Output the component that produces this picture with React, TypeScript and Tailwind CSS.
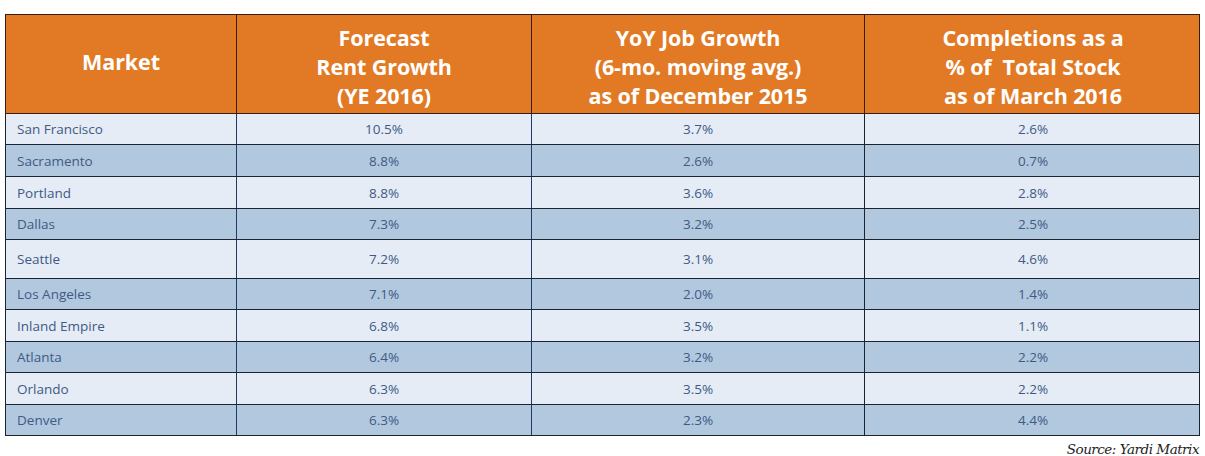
const rows = [
  { market: 'San Francisco', rent: '10.5%', job: '3.7%', comp: '2.6%', h: 'h-[31px]' },
  { market: 'Sacramento', rent: '8.8%', job: '2.6%', comp: '0.7%', h: 'h-[32px]' },
  { market: 'Portland', rent: '8.8%', job: '3.6%', comp: '2.8%', h: 'h-[32px]' },
  { market: 'Dallas', rent: '7.3%', job: '3.2%', comp: '2.5%', h: 'h-[31px]' },
  { market: 'Seattle', rent: '7.2%', job: '3.1%', comp: '4.6%', h: 'h-[39px]' },
  { market: 'Los Angeles', rent: '7.1%', job: '2.0%', comp: '1.4%', h: 'h-[31px]' },
  { market: 'Inland Empire', rent: '6.8%', job: '3.5%', comp: '1.1%', h: 'h-[32px]' },
  { market: 'Atlanta', rent: '6.4%', job: '3.2%', comp: '2.2%', h: 'h-[31px]' },
  { market: 'Orlando', rent: '6.3%', job: '3.5%', comp: '2.2%', h: 'h-[32px]' },
  { market: 'Denver', rent: '6.3%', job: '2.3%', comp: '4.4%', h: 'h-[31px]' },
];

const headers = [
  ['Market'],
  ['Forecast', 'Rent Growth', '(YE 2016)'],
  ['YoY Job Growth', '(6-mo. moving avg.)', 'as of December 2015'],
  ['Completions as a', '% of  Total Stock', 'as of March 2016'],
];

export default function App() {
  return (
    <div className="w-[1205px] h-[456px] bg-white pt-[14px] pl-[5px] font-['Open_Sans',sans-serif]">
      <div className="w-[1195px]">
        {/* Header */}
        <div className="grid grid-cols-[231px_295px_333px_336px] h-[100px] bg-[#e27a25] border border-[#3a1d0c]">
          {headers.map((lines, i) => (
            <div
              key={i}
              className={`flex flex-col items-center justify-center text-white font-bold text-[21.5px] leading-[29px] tracking-[-0.1px] ${
                i === 0 ? 'pb-[6px]' : 'pt-[4px]'
              } ${i < 3 ? 'border-r border-[#3a1d0c]' : ''}`}
            >
              {lines.map((l) => (
                <span key={l} className="whitespace-pre">{l}</span>
              ))}
            </div>
          ))}
        </div>

        {/* Body */}
        {rows.map((r, idx) => (
          <div
            key={r.market}
            className={`grid grid-cols-[231px_295px_333px_336px] ${r.h} border-x border-b border-[#1c2330] text-[13.5px] text-[#3f5a86] ${
              idx % 2 === 0 ? 'bg-[#e5ecf5]' : 'bg-[#b2c8de]'
            }`}
          >
            <div className="flex items-center pl-[11px] pt-[1px] border-r border-[#1d3b66]">{r.market}</div>
            <div className="flex items-center justify-center pt-[1px] border-r border-[#1d3b66]">{r.rent}</div>
            <div className="flex items-center justify-center pt-[1px] border-r border-[#1c2330]">{r.job}</div>
            <div className="flex items-center justify-center pt-[1px]">{r.comp}</div>
          </div>
        ))}

        <div className="flex justify-end pr-[1px] pt-[3px] text-[13.5px] italic text-[#222] font-['DejaVu_Serif',serif] tracking-[-0.5px]">
          Source: Yardi Matrix
        </div>
      </div>
    </div>
  );
}
